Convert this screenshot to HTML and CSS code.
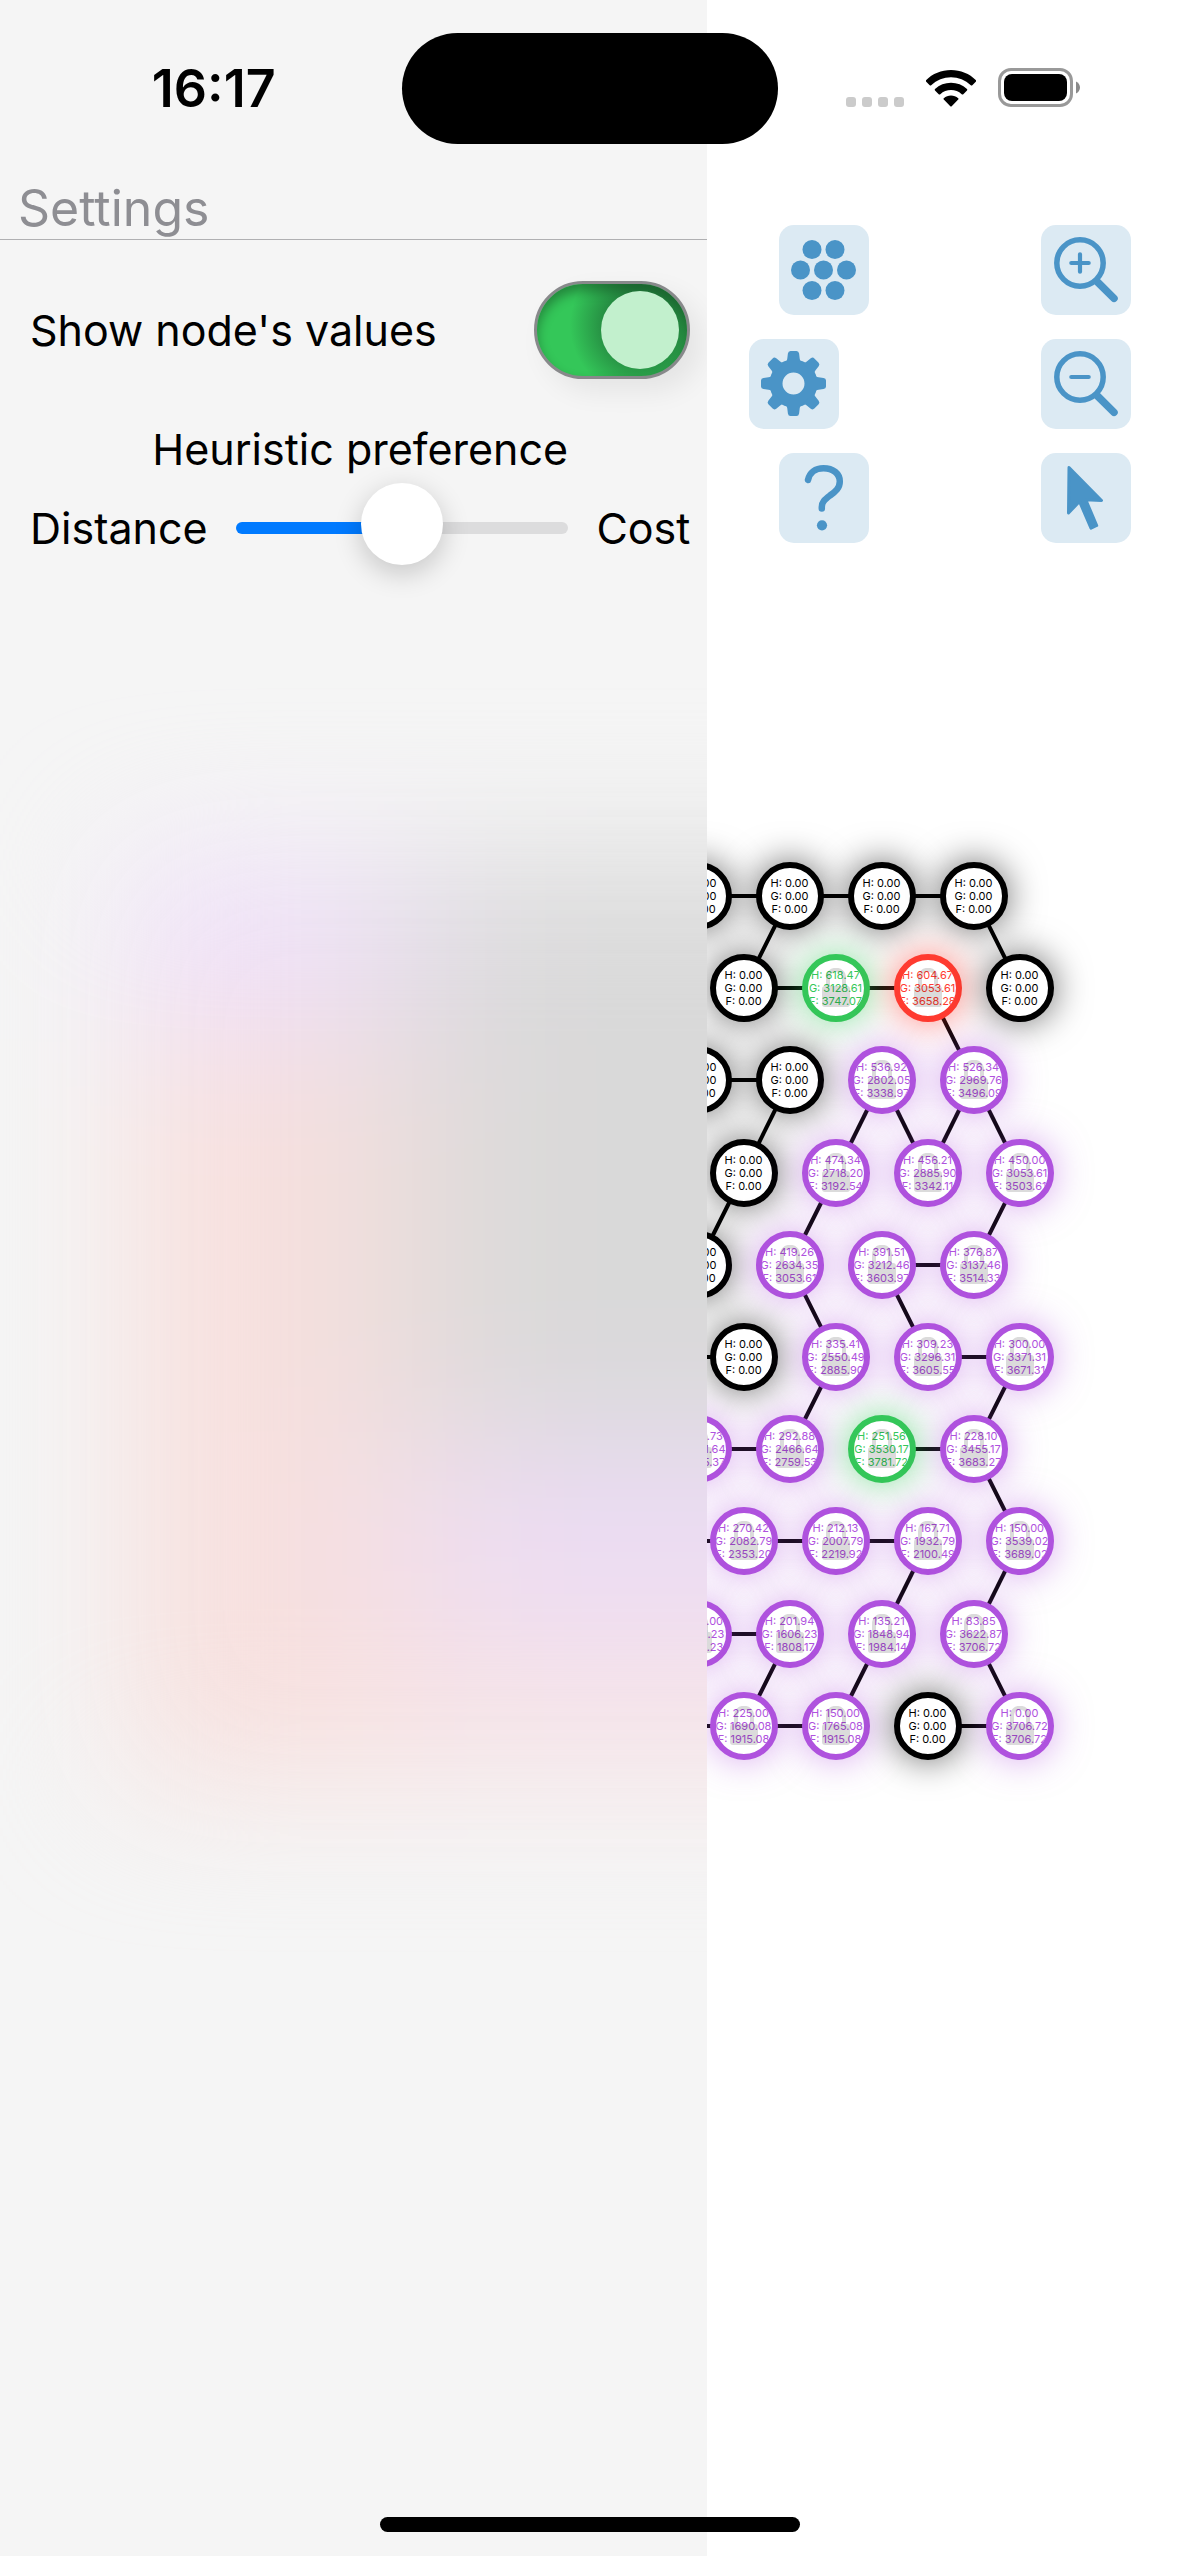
FILE: index.html
```
<!DOCTYPE html>
<html lang="en">
<head>
<meta charset="utf-8">
<meta name="viewport" content="width=device-width, initial-scale=1">
<title>Path finder</title>
<link rel="stylesheet" href="styles.css">
</head>
<body>
<div class="app">
  <section class="graph" id="graph" aria-label="Graph">
    <svg class="edges" id="edges" aria-hidden="true"></svg>
  </section>

  <aside class="panel">
    <h1 class="panel-title">Settings</h1>
    <div class="panel-body">
      <label class="row">
        <span>Show node's values</span>
        <input class="switch" type="checkbox" role="switch" checked>
      </label>
      <div class="preference">
        <label class="preference-title" for="heuristic">Heuristic preference</label>
        <div class="row">
          <span>Distance</span>
          <input class="slider" id="heuristic" type="range" min="0" max="100" value="50">
          <span>Cost</span>
        </div>
      </div>
    </div>
  </aside>

  <nav class="tools" aria-label="Tools">
    <div class="tool-column">
      <button class="tool" type="button" aria-label="Map">
        <svg viewBox="0 0 90 90" fill="currentColor"><circle cx="33" cy="24.500" r="9.500"/><circle cx="56" cy="24.500" r="9.500"/><circle cx="21.500" cy="45" r="9.500"/><circle cx="44.500" cy="45" r="9.500"/><circle cx="67.500" cy="45" r="9.500"/><circle cx="33" cy="65.500" r="9.500"/><circle cx="56" cy="65.500" r="9.500"/></svg>
      </button>
      <button class="tool tool-active" type="button" aria-label="Settings">
        <svg viewBox="0 0 90 90" fill="currentColor">
          <g transform="translate(44.500 44.500)">
            <path fill-rule="evenodd" d="M0-24A24 24 0 1 1 0 24A24 24 0 1 1 0-24ZM0-11A11 11 0 1 0 0 11A11 11 0 1 0 0-11Z"/>
            <g id="teeth"><path id="tooth" d="M-9-21C-7-22-6.500-23-6.200-25L-5.600-30Q-5.200-32.500-3-32.500H3Q5.200-32.500 5.600-30L6.200-25C6.500-23 7-22 9-21Z"/>
            <use href="#tooth" transform="rotate(90)"/><use href="#tooth" transform="rotate(180)"/><use href="#tooth" transform="rotate(270)"/></g>
            <use href="#teeth" transform="rotate(45)"/>
          </g>
        </svg>
      </button>
      <button class="tool" type="button" aria-label="Help">
        <svg viewBox="0 0 90 90" fill="none" stroke="currentColor" stroke-width="6.500" stroke-linecap="round" stroke-linejoin="round"><path d="M29 27C30.500 19.500 36.500 15.200 44.500 15.200C54 15.200 60.800 20.500 60.800 28.500C60.800 35 56.500 38.500 51 42.500C45.500 46.700 42.800 49 42.800 54V55.500"/><circle cx="43" cy="72.300" r="5.100" fill="currentColor" stroke="none"/></svg>
      </button>
    </div>
    <div class="tool-column">
      <button class="tool" type="button" aria-label="Zoom in">
        <svg viewBox="0 0 90 90" fill="none" stroke="currentColor" stroke-linecap="round"><circle cx="39" cy="38" r="23.200" stroke-width="5.500"/><path stroke-width="4.200" d="M30.300 38H47.700M39 29.300V46.700"/><path stroke-width="7.500" d="M56.500 57L73 73.300"/></svg>
      </button>
      <button class="tool" type="button" aria-label="Zoom out">
        <svg viewBox="0 0 90 90" fill="none" stroke="currentColor" stroke-linecap="round"><circle cx="39" cy="38" r="23.200" stroke-width="5.500"/><path stroke-width="4.200" d="M30.300 38H47.700"/><path stroke-width="7.500" d="M56.500 57L73 73.300"/></svg>
      </button>
      <button class="tool" type="button" aria-label="Select">
        <svg viewBox="0 0 90 90" fill="currentColor" stroke="currentColor" stroke-width="3" stroke-linejoin="round"><path d="M28 14.500L60.500 47.500L44.800 46.800L55.700 72.500L50 75.200L38.500 48.500L27.500 60Z"/></svg>
      </button>
    </div>
  </nav>

  <header class="status">
    <time class="clock">16:17</time>
    <div class="island"></div>
    <div class="indicators">
      <svg class="signal" viewBox="0 0 58 10" fill="#cbcbcb"><rect width="10" height="10" rx="3"/><rect x="16" width="10" height="10" rx="3"/><rect x="32" width="10" height="10" rx="3"/><rect x="48" width="10" height="10" rx="3"/></svg>
      <svg class="wifi" viewBox="0 0 50 37"><path d="M25 0C34.500 0 43.500 3.700 50 10.200Q50.500 11 50 11.500L46.300 15.200Q45.500 15.800 44.800 15.200C39.300 10 32.300 7.200 25 7.200S10.700 10 5.200 15.200Q4.500 15.800 3.700 15.200L0 11.500Q-.500 11 0 10.200C6.500 3.700 15.500 0 25 0ZM25 12.800C31 12.800 36.600 15 41 19Q41.600 19.800 41 20.400L37.300 24.200Q36.500 24.900 35.700 24.200C32.800 21.600 29 20.100 25 20.100S17.200 21.600 14.300 24.200Q13.500 24.900 12.700 24.200L9 20.400Q8.400 19.800 9 19C13.400 15 19 12.800 25 12.800ZM25 25.600C27.700 25.600 30.200 26.500 32.200 28.200Q32.900 28.900 32.200 29.600L25.700 36.200Q25 36.900 24.300 36.200L17.800 29.600Q17.100 28.900 17.800 28.200C19.800 26.500 22.300 25.600 25 25.600Z"/></svg>
      <svg class="battery" viewBox="0 0 82 39"><rect x="1.500" y="1.500" width="72" height="36" rx="11.500" fill="none" stroke="#999" stroke-width="3"/><rect x="6" y="6" width="63" height="27" rx="8"/><path d="M78 13.500C80.500 14.500 82 17 82 19.500S80.500 24.500 78 25.500Z" fill="#8a8a8a"/></svg>
    </div>
  </header>
  <div class="home-indicator"></div>
</div>
<script src="graph.js"></script>
</body>
</html>
```
FILE: styles.css
```
* {
  box-sizing: border-box;
}

body {
  margin: 0;
  background: #fff;
  color: #000;
  font-family: Inter, "Liberation Sans", sans-serif;
}

.app {
  position: relative;
  display: flex;
  justify-content: space-between;
  min-height: 100vh;
  overflow: hidden;
}

/* Status bar, over the panel and the tools */
.status {
  position: absolute;
  inset: 0 0 auto;
  display: grid;
  grid-template-columns: 1fr 376px 1fr;
  align-items: center;
  padding-top: 33px;
}

.clock {
  padding-left: 26px;
  font-size: 52px;
  font-weight: 600;
  line-height: 60px;
  text-align: center;
}

.island {
  height: 111px;
  border-radius: 56px;
  background: #000;
}

.indicators {
  display: flex;
  align-items: flex-end;
  gap: 22px;
  padding: 0 0 2px 68px;
}

.signal {
  width: 58px;
  height: 10px;
}

.wifi {
  width: 50px;
  height: 37px;
}

.battery {
  width: 82px;
  height: 39px;
}

.home-indicator {
  position: absolute;
  bottom: 24px;
  left: 50%;
  width: 420px;
  height: 15px;
  margin-left: -210px;
  border-radius: 8px;
  background: #000;
}

/* Settings panel */
.panel {
  position: relative;
  width: 60%;
  padding-top: 177px;
  overflow: hidden;
  background: #f5f5f5;
}

/* Frosted colours of the graph behind the panel */
.panel::before {
  content: "";
  position: absolute;
  top: 860px;
  right: -240px;
  left: 130px;
  height: 920px;
  background:
    linear-gradient(90deg, #f7e0de 180px, #f7e0de00 380px) 0 180px / 100% 100% no-repeat,
    linear-gradient(90deg, #efe0f8 180px, #efe0f800 380px) 0 0 / 100% 180px no-repeat,
    linear-gradient(#d9d9d9 580px, #ecdcf4 580px 780px, #f6e2e6 780px);
  filter: blur(72px);
}

.panel-title {
  margin: 0;
  padding-left: 18px;
  border-bottom: 1px solid #b0b0b2;
  color: #8e8e93;
  font-size: 50px;
  font-weight: 400;
  line-height: 62px;
}

.panel-body {
  position: relative;
  display: flex;
  flex-direction: column;
  gap: 43px;
  padding: 41px 17px 0 30px;
  font-size: 43px;
  line-height: 54px;
}

.row {
  display: flex;
  align-items: center;
  justify-content: space-between;
}

.preference {
  display: flex;
  flex-direction: column;
  gap: 7px;
}

.preference-title {
  text-align: center;
}

.switch {
  appearance: none;
  display: flex;
  align-items: center;
  justify-content: flex-end;
  width: 156px;
  height: 98px;
  margin: 0;
  padding: 0 8px;
  border: 3px solid #88898b;
  border-radius: 49px;
  background: radial-gradient(circle at 108px 45%, #258a41 36px, #34c75900 72px) border-box, #34c759;
  box-shadow: inset 0 7px 12px #0005, 12px 12px 28px #00000012;
}

.switch::before {
  content: "";
  width: 78px;
  height: 78px;
  border-radius: 50%;
  background: #c2f0cd;
}

.switch:not(:checked) {
  justify-content: flex-start;
  background: #e9e9ea;
}

.slider {
  appearance: none;
  flex: 1;
  min-width: 0;
  height: 90px;
  margin: 0 28px;
  background: none;
}

.slider::-webkit-slider-runnable-track {
  height: 12px;
  border-radius: 6px;
  background: linear-gradient(90deg, #007aff 50%, #dcdcdd 50%);
}

.slider::-webkit-slider-thumb {
  appearance: none;
  width: 82px;
  height: 82px;
  margin-top: -39px;
  border-radius: 50%;
  background: #fff;
  box-shadow: 0 8px 28px #0003;
}

/* Tools */
.tools {
  display: flex;
  flex: 1;
  justify-content: space-between;
  padding: 225px 48px 0 72px;
}

.tool-column {
  display: flex;
  flex-direction: column;
  gap: 24px;
}

.tool {
  width: 90px;
  height: 90px;
  padding: 0;
  border: 0;
  border-radius: 15px;
  background: #dceaf3;
  color: #4a94c7;
}

.tool-active {
  margin-left: -30px;
}

.tool svg {
  display: block;
  width: 90px;
  height: 90px;
}

/* Graph canvas, centred in the window under the panel */
.graph {
  position: absolute;
  top: 896px;
  left: 50%;
  width: 924px;
  height: 830px;
  margin-left: -463px;
}

.edges {
  position: absolute;
  width: 100%;
  height: 100%;
  overflow: visible;
  stroke: #000;
  stroke-width: 4;
}

.node {
  --tone: #000;
  --glow: #0009;
  position: absolute;
  display: flex;
  flex-direction: column;
  align-items: center;
  justify-content: center;
  width: 68px;
  height: 68px;
  margin: -34px 0 0 -34px;
  border: 6px solid var(--tone);
  border-radius: 50%;
  overflow: hidden;
  background: #fff;
  box-shadow: 0 0 36px var(--glow);
  color: var(--tone);
  font-size: 11px;
  line-height: 13px;
  white-space: nowrap;
}

.node-closed {
  --tone: #af52de;
  --glow: #af52de80;
}

.node-open {
  --tone: #34c759;
  --glow: #34c759a0;
}

.node-current {
  --tone: #ff3b30;
  --glow: #ff3b30a0;
}

.lock {
  position: absolute;
  top: 8px;
  left: 14px;
  width: 28px;
  height: 40px;
  opacity: 0.14;
}
```
FILE: graph.js
```
// Grid of nodes: even rows are shifted by half a column.
const COLUMN = 92;
const ROW = 92.2;
const LEFT = 571;
const x = (row, col) => LEFT + col * COLUMN + (row % 2 ? 0 : COLUMN / 2);
const y = row => Math.round((row - 1) * ROW);

// [row, column, state, H, G, F]
const nodes = [
  [1, 0], [1, 1], [1, 2], [1, 3],
  [2, 0], [2, 1, "open", "618.47", "3128.61", "3747.07"], [2, 2, "current", "604.67", "3053.61", "3658.28"], [2, 3],
  [3, 0], [3, 1], [3, 2, "closed", "536.92", "2802.05", "3338.97"], [3, 3, "closed", "526.34", "2969.76", "3496.09"],
  [4, 0], [4, 1, "closed", "474.34", "2718.20", "3192.54"], [4, 2, "closed", "456.21", "2885.90", "3342.11"], [4, 3, "closed", "450.00", "3053.61", "3503.61"],
  [5, 0], [5, 1, "closed", "419.26", "2634.35", "3053.61"], [5, 2, "closed", "391.51", "3212.46", "3603.97"], [5, 3, "closed", "376.87", "3137.46", "3514.33"],
  [6, 0], [6, 1, "closed", "335.41", "2550.49", "2885.90"], [6, 2, "closed", "309.23", "3296.31", "3605.55"], [6, 3, "closed", "300.00", "3371.31", "3671.31"],
  [7, 0, "closed", "363.73", "2541.64", "2905.37"], [7, 1, "closed", "292.88", "2466.64", "2759.53"], [7, 2, "open", "251.56", "3530.17", "3781.72"], [7, 3, "closed", "228.10", "3455.17", "3683.27"],
  [8, 0, "closed", "270.42", "2082.79", "2353.20"], [8, 1, "closed", "212.13", "2007.79", "2219.92"], [8, 2, "closed", "167.71", "1932.79", "2100.49"], [8, 3, "closed", "150.00", "3539.02", "3689.02"],
  [9, 0, "closed", "285.00", "1531.23", "1816.23"], [9, 1, "closed", "201.94", "1606.23", "1808.17"], [9, 2, "closed", "135.21", "1848.94", "1984.14"], [9, 3, "closed", "83.85", "3622.87", "3706.72"],
  [10, 0, "closed", "225.00", "1690.08", "1915.08"], [10, 1, "closed", "150.00", "1765.08", "1915.08"], [10, 2], [10, 3, "closed", "0.00", "3706.72", "3706.72"]
];

// [from row, from column, to row, to column]
const edges = [
  [1, 0, 1, 3], [1, 1, 2, 0], [1, 3, 2, 3],
  [2, 0, 2, 2], [2, 2, 3, 3],
  [3, 0, 3, 1], [3, 1, 4, 0], [3, 2, 4, 1], [3, 2, 4, 2], [3, 3, 4, 2], [3, 3, 4, 3],
  [4, 0, 5, 0], [4, 1, 5, 1], [4, 3, 5, 3],
  [5, 2, 5, 3], [5, 1, 6, 1], [5, 2, 6, 2],
  [6, -1, 6, 0], [6, 2, 6, 3], [6, 1, 7, 1], [6, 3, 7, 3],
  [7, 0, 7, 1], [7, 2, 7, 3], [7, 3, 8, 3],
  [8, -1, 8, 2], [8, 2, 9, 2], [8, 3, 9, 3],
  [9, 0, 9, 1], [9, 1, 10, 0], [9, 2, 10, 1], [9, 3, 10, 3],
  [10, -1, 10, 1], [10, 2, 10, 3]
];

const lock = '<svg class="lock" viewBox="0 0 28 40"><path d="M3 18H25Q28 18 28 21V36Q28 39 25 39H3Q0 39 0 36V21Q0 18 3 18Z"/><path d="M6 18V10C6 -1 22 -1 22 10V18" fill="none" stroke="#000" stroke-width="4"/></svg>';

document.getElementById("edges").innerHTML = edges
  .map(([r1, c1, r2, c2]) => `<line x1="${x(r1, c1)}" y1="${y(r1)}" x2="${x(r2, c2)}" y2="${y(r2)}"/>`)
  .join("");

document.getElementById("graph").insertAdjacentHTML("beforeend", nodes
  .map(([row, col, state = "idle", h = "0.00", g = "0.00", f = "0.00"]) =>
    `<div class="node node-${state}" style="left:${x(row, col)}px;top:${y(row)}px"><span>H: ${h}</span><span>G: ${g}</span><span>F: ${f}</span>${state === "idle" ? "" : lock}</div>`)
  .join(""));
```
